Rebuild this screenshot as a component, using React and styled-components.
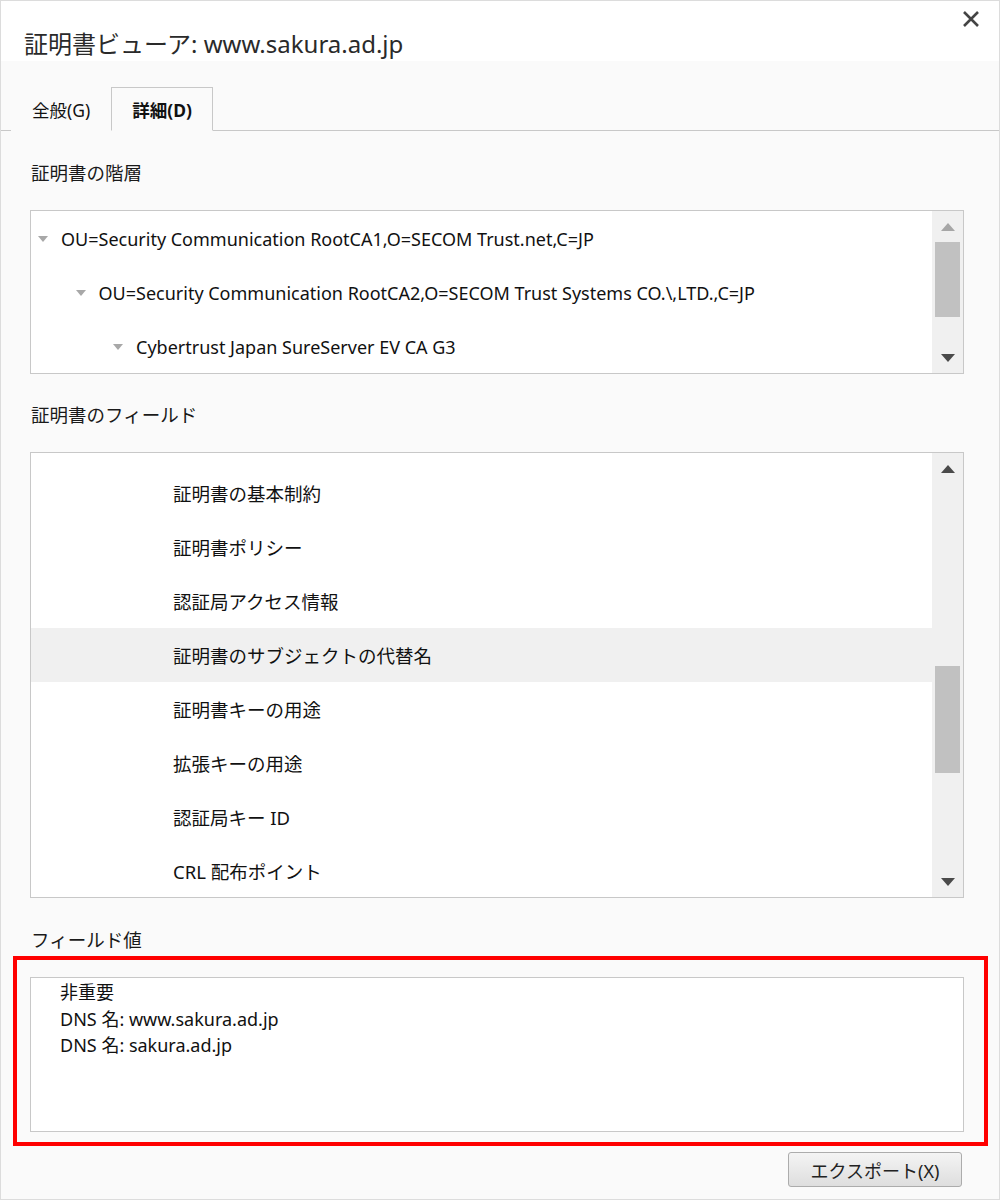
import React from 'react';
import styled, { createGlobalStyle } from 'styled-components';

const GlobalStyle = createGlobalStyle`
	html, body {
		margin: 0;
		padding: 0;
		background: #ffffff;
	}
	* {
		box-sizing: border-box;
	}
`;

const FONT = `"Noto Sans", "Noto Sans CJK JP", sans-serif`;

const Dialog = styled.div`
	width: 1000px;
	height: 1200px;
	border: 1px solid #dcdcdc;
	background: #fafafa;
	font-family: ${FONT};
	color: #111;
	display: flex;
	flex-direction: column;
`;

const Header = styled.div`
	height: 60px;
	background: #ffffff;
	display: flex;
	justify-content: space-between;
	align-items: flex-start;
	padding: 0 19px 0 23px;
`;

const Title = styled.h1`
	margin: 31px 0 0;
	font-size: 24px;
	font-weight: 400;
	line-height: 24px;
	color: #2a2a2a;
`;

const CloseButton = styled.button`
	margin-top: 9px;
	width: 18px;
	height: 18px;
	padding: 0;
	border: none;
	background: none;
	display: flex;
	cursor: pointer;
`;

const TabBar = styled.div`
	display: flex;
	padding: 26px 0 0 10px;
	border-bottom: 1px solid #c8c8c8;
`;

const Tab = styled.div`
	height: 44px;
	margin-bottom: -1px;
	padding: 0 20px;
	display: flex;
	align-items: center;
	font-size: 17.5px;
	font-weight: ${(p) => (p.$active ? 700 : 400)};
	color: #111;
	border: 1px solid ${(p) => (p.$active ? '#c8c8c8' : 'transparent')};
	border-bottom: 1px solid ${(p) => (p.$active ? '#fafafa' : 'transparent')};
	background: #fafafa;
`;

const Body = styled.div`
	display: flex;
	flex-direction: column;
	padding: 0 35px 0 29px;
`;

const Label = styled.div`
	margin-top: ${(p) => p.$top}px;
	font-size: 18.5px;
	line-height: 26px;
	color: #1a1a1a;
	padding-left: 1px;
`;

const ListBox = styled.div`
	margin-top: ${(p) => p.$top || 0}px;
	height: ${(p) => p.$height}px;
	border: 1px solid #c8c8c8;
	background: #ffffff;
	display: flex;
	overflow: hidden;
`;

const ListItems = styled.div`
	flex: 1;
	padding-top: ${(p) => p.$pad || 0}px;
	overflow: hidden;
`;

const TreeRow = styled.div`
	height: 54px;
	display: flex;
	align-items: center;
	gap: 13px;
	padding-left: ${(p) => 7 + p.$level * 37.5}px;
	font-size: 18px;
	white-space: nowrap;
`;

const FieldRow = styled.div`
	height: 54px;
	display: flex;
	align-items: center;
	padding-left: 142px;
	font-size: 18.5px;
	white-space: nowrap;
	background: ${(p) => (p.$selected ? '#f0f0f0' : '#ffffff')};
`;

const Scrollbar = styled.div`
	width: 31px;
	background: #f0f0f0;
	display: flex;
	flex-direction: column;
`;

const ScrollButton = styled.div`
	height: 31px;
	display: flex;
	align-items: center;
	justify-content: center;
	flex-shrink: 0;
`;

const ScrollTrack = styled.div`
	flex: 1;
	padding: 0 3px 0 3px;
`;

const Thumb = styled.div`
	height: ${(p) => p.$size}px;
	background: #c1c1c1;
`;

const Highlight = styled.div`
	margin: 3px -24px 0 -17px;
	border: 4px solid #ff0000;
	padding: 17px 20px 10px 13px;
`;

const ValueBox = styled.div`
	height: 155px;
	border: 1px solid #c8c8c8;
	background: #ffffff;
	padding: 1px 0 0 29px;
	font-size: 18px;
	line-height: 26.5px;
`;

const Footer = styled.div`
	display: flex;
	justify-content: flex-end;
	margin-top: 6px;
	padding-right: 2px;
`;

const Button = styled.button`
	width: 174px;
	height: 35px;
	border: 1px solid #acacac;
	border-radius: 3px;
	background: linear-gradient(#f4f4f4, #dedede);
	font-family: ${FONT};
	font-size: 18px;
	color: #222;
	cursor: pointer;
`;

const Arrow = ({ up, color }) => (
	<svg width="14" height="8" viewBox="0 0 14 8">
		<polygon points={up ? '0,8 14,8 7,0' : '0,0 14,0 7,8'} fill={color} />
	</svg>
);

const Twisty = () => (
	<svg width="10" height="6" viewBox="0 0 10 6">
		<polygon points="0,0 10,0 5,6" fill="#a8a8a8" />
	</svg>
);

const ScrollBar = ({ upColor, offset, size }) => (
	<Scrollbar>
		<ScrollButton>
			<Arrow up color={upColor} />
		</ScrollButton>
		<ScrollTrack>
			<Thumb $size={size} style={{ marginTop: offset }} />
		</ScrollTrack>
		<ScrollButton>
			<Arrow color="#4a4a4a" />
		</ScrollButton>
	</Scrollbar>
);

const hierarchy = [
	{ level: 0, text: 'OU=Security Communication RootCA1,O=SECOM Trust.net,C=JP' },
	{ level: 1, text: 'OU=Security Communication RootCA2,O=SECOM Trust Systems CO.\\,LTD.,C=JP' },
	{ level: 2, text: 'Cybertrust Japan SureServer EV CA G3' }
];

const fields = [
	'証明書の基本制約',
	'証明書ポリシー',
	'認証局アクセス情報',
	'証明書のサブジェクトの代替名',
	'証明書キーの用途',
	'拡張キーの用途',
	'認証局キー ID',
	'CRL 配布ポイント'
];

const App = () => {
	return (
		<Dialog>
			<GlobalStyle />
			<Header>
				<Title>証明書ビューア: www.sakura.ad.jp</Title>
				<CloseButton>
					<svg width="18" height="18" viewBox="0 0 18 18">
						<path d="M2 2 L16 16 M16 2 L2 16" stroke="#444" strokeWidth="2.6" />
					</svg>
				</CloseButton>
			</Header>
			<TabBar>
				<Tab>全般(G)</Tab>
				<Tab $active>詳細(D)</Tab>
			</TabBar>
			<Body>
				<Label $top={29}>証明書の階層</Label>
				<ListBox $top={24} $height={164}>
					<ListItems $pad={1}>
						{hierarchy.map((row, key) => (
							<TreeRow $level={row.level} key={key}>
								<Twisty />
								<span>{row.text}</span>
							</TreeRow>
						))}
					</ListItems>
					<ScrollBar upColor="#a6a6a6" offset={0} size={75} />
				</ListBox>

				<Label $top={28}>証明書のフィールド</Label>
				<ListBox $top={24} $height={446}>
					<ListItems $pad={13}>
						{fields.map((name, key) => (
							<FieldRow $selected={key === 3} key={key}>
								{name}
							</FieldRow>
						))}
					</ListItems>
					<ScrollBar upColor="#4a4a4a" offset={182} size={107} />
				</ListBox>

				<Label $top={29}>フィールド値</Label>
				<Highlight>
					<ValueBox>
						<div>非重要</div>
						<div>DNS 名: www.sakura.ad.jp</div>
						<div>DNS 名: sakura.ad.jp</div>
					</ValueBox>
				</Highlight>
				<Footer>
					<Button>エクスポート(X)</Button>
				</Footer>
			</Body>
		</Dialog>
	);
};

export default App;
